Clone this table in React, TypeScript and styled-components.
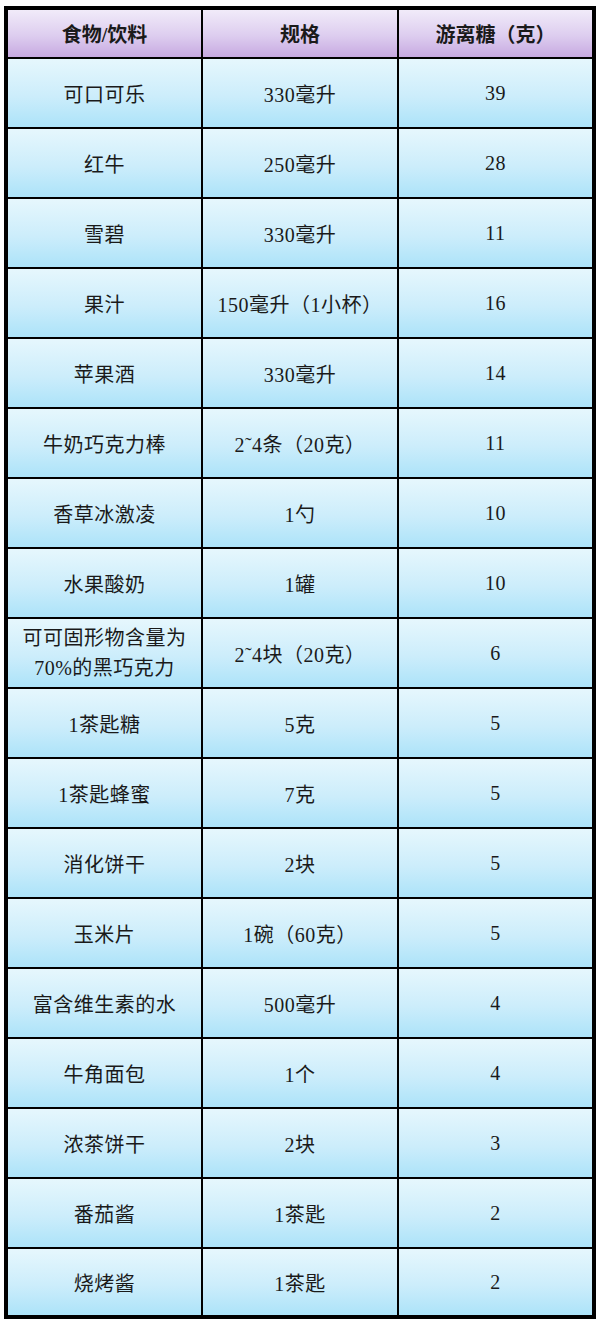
import React from "react";
import styled, { createGlobalStyle } from "styled-components";

const GlobalStyle = createGlobalStyle`
  html, body {
    margin: 0;
    padding: 0;
    background: #ffffff;
  }
`;

const rows: [string, string, string][] = [
  ["可口可乐", "330毫升", "39"],
  ["红牛", "250毫升", "28"],
  ["雪碧", "330毫升", "11"],
  ["果汁", "150毫升（1小杯）", "16"],
  ["苹果酒", "330毫升", "14"],
  ["牛奶巧克力棒", "2˜4条（20克）", "11"],
  ["香草冰激凌", "1勺", "10"],
  ["水果酸奶", "1罐", "10"],
  ["可可固形物含量为\n70%的黑巧克力", "2˜4块（20克）", "6"],
  ["1茶匙糖", "5克", "5"],
  ["1茶匙蜂蜜", "7克", "5"],
  ["消化饼干", "2块", "5"],
  ["玉米片", "1碗（60克）", "5"],
  ["富含维生素的水", "500毫升", "4"],
  ["牛角面包", "1个", "4"],
  ["浓茶饼干", "2块", "3"],
  ["番茄酱", "1茶匙", "2"],
  ["烧烤酱", "1茶匙", "2"],
];

const Page = styled.div`
  padding: 6px 0 5px 4px;
`;

const Grid = styled.div`
  display: grid;
  grid-template-columns: 193px 194px 193px;
  grid-template-rows: 47px repeat(17, 68px) 66px;
  gap: 2px;
  padding: 4px;
  width: 584px;
  background: #000000;
  font-family: "Liberation Serif", "Noto Sans CJK SC", serif;
  color: #1a1a1a;
`;

const HeadCell = styled.div`
  display: flex;
  align-items: center;
  justify-content: center;
  background: linear-gradient(180deg, #f1ebf9 0%, #ddcdef 55%, #c7a9e1 100%);
  font-size: 20px;
  font-weight: 700;
`;

const Cell = styled.div<{ $multi?: boolean }>`
  display: flex;
  align-items: center;
  justify-content: center;
  text-align: center;
  white-space: pre-line;
  background: linear-gradient(180deg, #e6f7fd 0%, #ccedfb 55%, #ace3f9 100%);
  font-size: 20px;
  letter-spacing: 0.5px;
  line-height: ${(p) => (p.$multi ? "30px" : "normal")};
`;

const App = () => {
  return (
    <Page>
      <GlobalStyle />
      <Grid>
        <HeadCell>食物/饮料</HeadCell>
        <HeadCell>规格</HeadCell>
        <HeadCell>游离糖（克）</HeadCell>
        {rows.map(([food, size, sugar]) => (
          <React.Fragment key={food}>
            <Cell $multi={food.includes("\n")}>{food}</Cell>
            <Cell>{size}</Cell>
            <Cell>{sugar}</Cell>
          </React.Fragment>
        ))}
      </Grid>
    </Page>
  );
};

export default App;
